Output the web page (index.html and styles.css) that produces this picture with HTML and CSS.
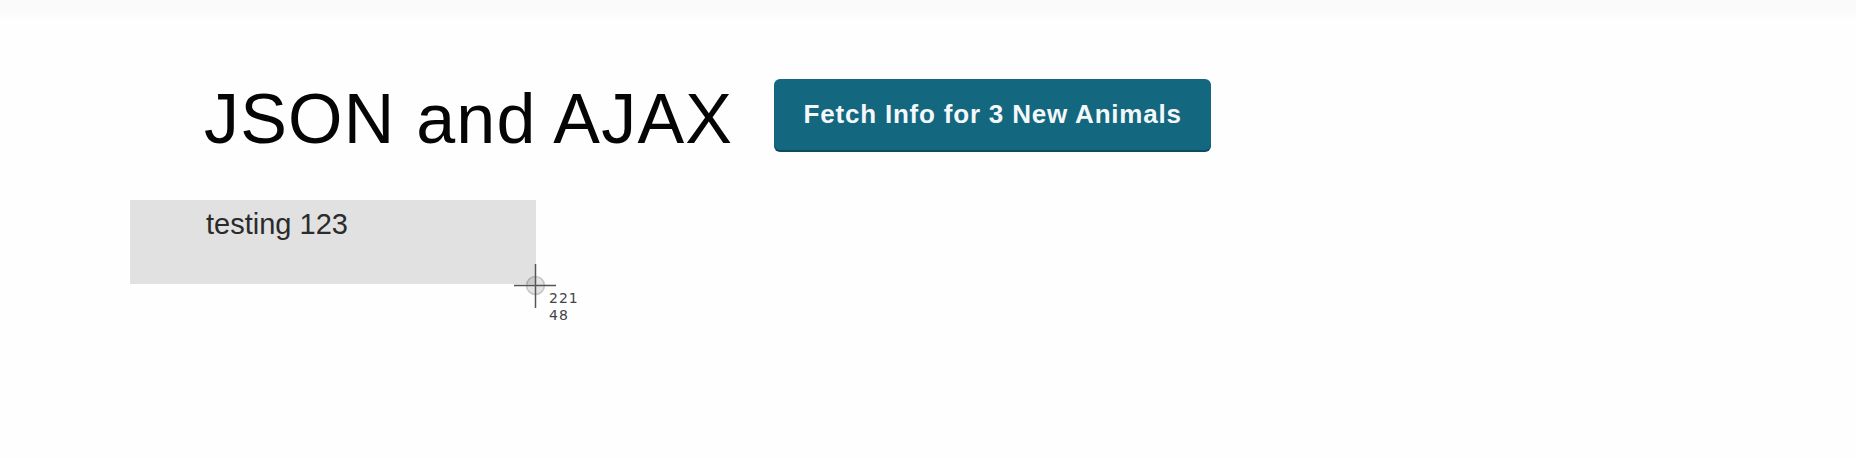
FILE: index.html
```html
<!DOCTYPE html>
<html>
<head>
<meta charset="utf-8">
<title>JSON and AJAX</title>
<link rel="stylesheet" href="styles.css">
</head>
<body>
<div class="page">
  <header class="header-row">
    <h1 class="title">JSON and AJAX</h1>
    <button class="fetch-btn">Fetch Info for 3 New Animals</button>
  </header>
  <div class="info-box">
    <p class="info-text">testing 123</p>
  </div>
  <div class="cursor">
    <svg class="cursor-svg" width="44" height="46" viewBox="0 0 44 46">
      <circle cx="21.5" cy="21.5" r="9" fill="rgba(0,0,0,0.10)" stroke="rgba(0,0,0,0.18)" stroke-width="1.5"/>
      <line x1="0" y1="21.5" x2="42" y2="21.5" stroke="#555" stroke-width="1.5"/>
      <line x1="21.5" y1="0" x2="21.5" y2="44" stroke="#555" stroke-width="1.5"/>
    </svg>
    <div class="cursor-label">
      <div class="cursor-line">221</div>
      <div class="cursor-line">48</div>
    </div>
  </div>
</div>
</body>
</html>
```

FILE: styles.css
```css
html, body {
  margin: 0;
  padding: 0;
}
body {
  background: linear-gradient(#fafafa 0px, #fafafa 11px, #fefefe 19px, #fefefe 100%);
  min-height: 458px;
  font-family: "Liberation Sans", Arial, sans-serif;
}
.page {
  position: relative;
  height: 458px;
}
.header-row {
  display: flex;
  align-items: flex-start;
  padding-top: 79px;
  padding-left: 204px;
  gap: 41px;
}
.title {
  margin: 5px 0 0 0;
  font-size: 70px;
  line-height: 70px;
  font-weight: 400;
  letter-spacing: 1.2px;
  color: #050505;
}
.fetch-btn {
  display: flex;
  align-items: center;
  justify-content: center;
  width: 437px;
  height: 71px;
  margin: 0;
  padding: 0;
  border: none;
  border-radius: 6px;
  background: #13677f;
  box-shadow: 0 2px 0 #0c4a5d;
  color: #f4f8fa;
  font-family: "Liberation Sans", Arial, sans-serif;
  font-size: 26px;
  font-weight: 700;
  letter-spacing: 0.8px;
}
.info-box {
  margin-top: 46px;
  margin-left: 130px;
  width: 406px;
  height: 84px;
  box-sizing: border-box;
  background: #e1e1e1;
  padding: 7px 0 0 76px;
}
.info-text {
  margin: 0;
  font-size: 29px;
  line-height: 34px;
  color: #2b2b2b;
}
.cursor {
  position: absolute;
  left: 514px;
  top: 264px;
}
.cursor-svg {
  display: block;
}
.cursor-label {
  position: absolute;
  left: 35px;
  top: 26px;
  font-family: "DejaVu Sans", sans-serif;
  font-size: 14px;
  line-height: 16.5px;
  letter-spacing: 1px;
  color: #444;
}
.cursor-line {
  white-space: nowrap;
}
```
